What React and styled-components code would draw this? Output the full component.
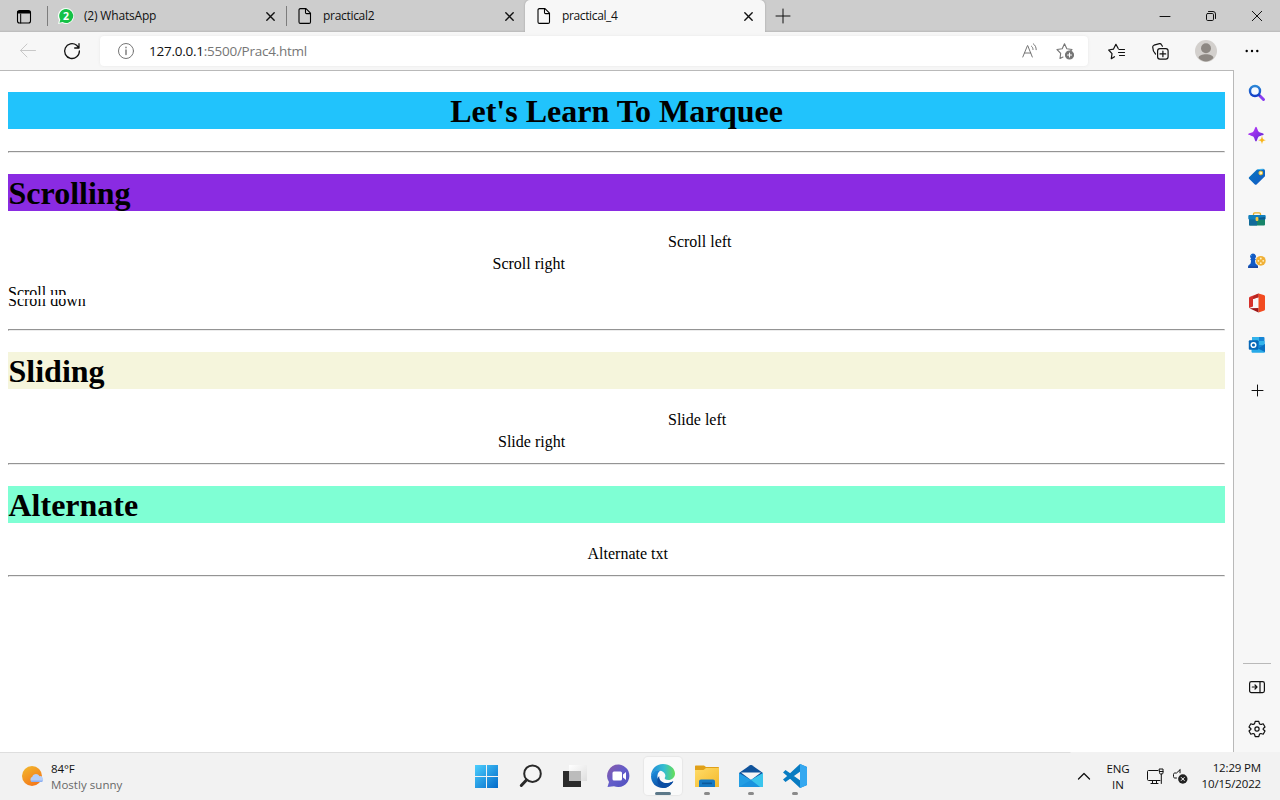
import React from "react";
import styled, { createGlobalStyle } from "styled-components";

const GlobalStyle = createGlobalStyle`
  * { box-sizing: border-box; }
  body { margin: 0; overflow: hidden; background: #fff; }
  svg { display: block; flex: none; overflow: visible; }
`;

const Screen = styled.div`
  width: 1280px;
  height: 800px;
  display: flex;
  flex-direction: column;
  font-family: "Open Sans", "Noto Sans", sans-serif;
  color: #111;
`;

const Label = styled.span`
  font-size: ${(p) => p.$size || 12}px;
  line-height: 16px;
  letter-spacing: ${(p) => p.$track || 0}px;
  color: ${(p) => p.$color || "#111"};
  white-space: nowrap;
`;

/* ---------- browser chrome ---------- */
const TabStrip = styled.header`
  height: 32px;
  flex: none;
  display: flex;
  background: linear-gradient(#cdcdcd 30px, #c3c3c3 31px, #b9b9b9 32px);
`;
const TabActions = styled.div`
  width: 47px;
  display: flex;
  align-items: center;
  justify-content: center;
`;
const Divider = styled.i`
  width: 1px;
  height: 20px;
  margin-top: 6px;
  background: #7d7d7d;
`;
const Tab = styled.div`
  width: ${(p) => p.$width}px;
  height: 32px;
  display: flex;
  align-items: center;
  padding: 0 ${(p) => p.$end || 11}px 0 ${(p) => p.$pad || 10}px;
  gap: 10px;
  background: ${(p) => (p.$active ? "#f7f7f7" : "transparent")};
  border-radius: 5px 5px 0 0;
  box-shadow: ${(p) => (p.$active ? "0 0 2px #999" : "none")};
  clip-path: inset(0 -3px 0 -3px);
  ${Label} { flex: 1; }
`;
const NewTab = styled.div`
  width: 35px;
  display: flex;
  align-items: center;
  justify-content: center;
`;
const WindowButtons = styled.div`
  margin-left: auto;
  display: flex;
  align-items: center;
`;
const WindowButton = styled.div`
  width: 46px;
  display: flex;
  justify-content: center;
`;
const Toolbar = styled.div`
  height: 38px;
  flex: none;
  display: flex;
  align-items: center;
  background: #f7f7f7;
`;
const ToolButton = styled.div`
  width: ${(p) => p.$width || 44}px;
  display: flex;
  justify-content: center;
`;
const AddressBar = styled.div`
  width: 988px;
  height: 30px;
  display: flex;
  align-items: center;
  padding: 0 14px 0 18px;
  background: #fff;
  border-radius: 4px;
  box-shadow: 0 0 3px #e6e6e6;
`;
const Url = styled.div`
  flex: 1;
  margin-left: 15px;
  display: flex;
`;
const AddressActions = styled.div`
  display: flex;
  align-items: center;
  gap: 18px;
`;
const Middle = styled.div`
  flex: 1;
  min-height: 0;
  display: flex;
  background: #f7f7f7;
`;

/* ---------- document ---------- */
const Document = styled.main`
  width: 1234px;
  border: solid #b9b9b9;
  border-width: 1px 1px 0 0;
  background: #fff;
  padding: 21px 8px 0;
  font-family: "Liberation Serif", serif;
  font-size: 16px;
  color: #000;
`;
const Heading = styled.h1`
  margin: 0;
  height: 37px;
  line-height: 38px;
  font-size: 32px;
  font-weight: bold;
  padding-left: ${(p) => (p.$align ? 0 : 0.5)}px;
  background: ${(p) => p.$bg};
  text-align: ${(p) => p.$align || "left"};
`;
const Rule = styled.hr`
  margin: ${(p) => p.$top}px 0 ${(p) => p.$bottom}px;
  height: 2px;
  border: 1px solid;
  border-color: #949494 #ececec #ececec #949494;
`;
const Marquees = styled.div`
  padding-top: 22px;
`;
const Marquee = styled.div`
  height: 22px;
  line-height: 18px;
  padding-left: ${(p) => p.$offset}px;
  white-space: nowrap;
`;
const ClippedMarquee = styled.div`
  height: ${(p) => p.$height}px;
  margin-top: ${(p) => p.$gap}px;
  line-height: 18px;
  overflow: hidden;
  display: flex;
  align-items: ${(p) => p.$anchor};
`;

/* ---------- sidebar ---------- */
const Sidebar = styled.aside`
  width: 46px;
  display: flex;
  flex-direction: column;
  align-items: center;
  padding-top: 2px;
`;
const SideItem = styled.div`
  height: ${(p) => p.$height || 42}px;
  display: flex;
  align-items: center;
`;
const SideFooter = styled.div`
  margin-top: auto;
  width: 28px;
  height: 89px;
  border-top: 1px solid #b9b9b9;
  padding-top: 2px;
  display: flex;
  flex-direction: column;
  align-items: center;
`;

/* ---------- taskbar ---------- */
const Taskbar = styled.footer`
  height: 48px;
  flex: none;
  display: grid;
  grid-template-columns: 467px 352px 1fr;
  background: linear-gradient(90deg, #dedede 1070px, #f2f2f2 1071px) 0 0 / 100% 1px no-repeat #f2f2f2;
`;
const Weather = styled.div`
  display: flex;
  align-items: center;
  padding: 1px 0 0 21px;
  gap: 7px;
`;
const Stack = styled.div`
  display: flex;
  flex-direction: column;
  align-items: ${(p) => p.$align || "flex-start"};
`;
const Apps = styled.div`
  display: flex;
  gap: 4px;
`;
const AppButton = styled.div`
  width: 40px;
  height: 48px;
  padding-top: 12px;
  display: flex;
  flex-direction: column;
  align-items: center;
`;
const ActivePlate = styled.div`
  width: 38px;
  height: 38px;
  margin: 5px 1px;
  padding-top: 7px;
  display: flex;
  flex-direction: column;
  align-items: center;
  background: #fafafa;
  border-radius: 4px;
  box-shadow: 0 0 1px 1px #e7e7e7;
`;
const Indicator = styled.i`
  width: ${(p) => (p.$active ? 16 : 6)}px;
  height: 3px;
  margin-top: 4px;
  border-radius: 2px;
  background: ${(p) => (p.$active ? "#5c7889" : "#8a8a8a")};
`;
const Tray = styled.div`
  display: flex;
  align-items: center;
  justify-content: flex-end;
  padding-right: 19px;
`;
const Languages = styled(Stack)`
  width: 30px;
  margin: 1px 14px 0 13px;
`;
const TrayIcons = styled.div`
  display: flex;
  gap: 9px;
  align-items: center;
  margin-right: 13px;
`;
const Clock = styled(Stack)`
  width: 60px;
`;

const Line = ({ w = 16, h = w, box = `0 0 ${w} ${h}`, color = "#111", sw = 1, children }) => (
  <svg width={w} height={h} viewBox={box} fill="none" stroke={color} strokeWidth={sw} strokeLinecap="round" strokeLinejoin="round">
    {children}
  </svg>
);

const TabCard = () => (
  <Line w={15} h={15} color="#000">
    <rect x="1.500" y="1.500" width="13" height="12.500" rx="2" strokeWidth="1.100" />
    <path d="M2 2.500h12v1.500H2z" fill="#000" strokeWidth="1" />
    <path d="M4.700 5v9" strokeWidth="1" />
  </Line>
);
const PageIcon = () => (
  <Line sw={1.1} color="#000">
    <path d="M4 .6h5l4.500 4.500V14c0 .8-.6 1.400-1.400 1.400H3.400c-.8 0-1.400-.6-1.400-1.400V2C2 1.200 2.600.6 3.400.6zM8.500.8v3.700c0 .6.500 1.100 1.100 1.100h3.700" />
  </Line>
);
const Close = () => (
  <Line w={9} color="#111" sw={1.400}><path d="M.8.800l7.400 7.400M8.200.800L.8 8.200" /></Line>
);
const Plus = ({ s = 13 }) => (
  <Line w={s}><path d={`M${s / 2} 0v${s}M0 ${s / 2}h${s}`} /></Line>
);
const WhatsApp = () => (
  <svg width="16" height="16" viewBox="0 0 16 16">
    <path d="M8 0a8 8 0 1 1-3.700 15.100L0 16l1-4A8 8 0 0 1 8 0z" fill="#f6fff8" />
    <path d="M8.200 1a7 7 0 1 1-3.600 13L1.500 14.700l.8-3A7 7 0 0 1 8.200 1z" fill="#15c146" />
    <text x="8.100" y="12" textAnchor="middle" fontFamily="Open Sans, sans-serif" fontWeight="700" fontSize="10.500" fill="#fff">2</text>
  </svg>
);

const SearchColor = () => (
  <svg width="18" height="18" viewBox="0 0 18 18">
    <path d="M11.500 11.500l4 4" stroke="#8a3df0" strokeWidth="3" strokeLinecap="round" />
    <path d="M10.500 10.500l1.500 1.500" stroke="#463cc7" strokeWidth="2" />
    <circle cx="7" cy="7" r="5" fill="#f5faff" stroke="url(#ring)" strokeWidth="2.400" />
    <defs><linearGradient id="ring" x2="0" y2="1"><stop stopColor="#2b86d6" /><stop offset="1" stopColor="#123fc8" /></linearGradient></defs>
  </svg>
);
const Sparkle = () => (
  <svg width="18" height="18" viewBox="0 0 18 18">
    <defs><linearGradient id="spark" x2="1" y2="1"><stop stopColor="#c33cff" /><stop offset="1" stopColor="#5a25cf" /></linearGradient></defs>
    <path d="M8 .8c1 0 1.500 3.800 2.800 4.900S15.800 7.200 15.800 8.200s-3.700 1.200-5 2.400S9 15.600 8 15.600s-1.500-3.800-2.800-5S.2 9.200.2 8.200s3.700-1.300 5-2.500S7 .8 8 .8z" fill="url(#spark)" />
    <path d="M14 10.200c.6 0 .7 2.100 1.200 2.700s2.600.7 2.600 1.300-2.100.6-2.600 1.100-.6 2.500-1.200 2.500-.7-1.900-1.200-2.500-2.600-.5-2.600-1.100 2.100-.7 2.600-1.300.6-2.700 1.200-2.700z" fill="#f8b416" stroke="#f7f7f7" strokeWidth=".5" />
  </svg>
);
const Tag = () => (
  <svg width="18" height="18" viewBox="0 0 18 18">
    <defs><linearGradient id="tag" x2="1" y2="1"><stop stopColor="#0875bd" /><stop offset="1" stopColor="#145bc8" /></linearGradient></defs>
    <path d="M9 1.500l6-.5c1.500 0 2 .8 2 2v5.200l-8.200 8c-.8.800-1.500.6-2.200 0L1.300 11c-.7-.7-.7-1.400 0-2.100z" fill="url(#tag)" />
    <path d="M10 1.600l5.500-.4" stroke="#43b8ed" strokeWidth="1" />
    <circle cx="12.800" cy="5" r="1.900" fill="#fff4bd" stroke="#e6b72e" />
  </svg>
);
const Toolbox = () => (
  <svg width="18" height="18" viewBox="0 0 18 18">
    <path d="M5.500 6V4c0-.8.500-1.200 1.300-1.200h4.400c.8 0 1.300.4 1.300 1.200v2" fill="none" stroke="#e9ae27" strokeWidth="1.300" />
    <rect x="1" y="8" width="16" height="7.500" rx="1" fill="#168469" />
    <path d="M1 8h8v7.500H2c-.6 0-1-.4-1-1z" fill="#126a99" />
    <rect x=".3" y="5" width="17.400" height="4.500" rx="1" fill="#127fbd" />
    <path d="M9 8l8-1v2.500H9z" fill="#0a5b8e" />
    <rect x="7.600" y="7" width="2.800" height="4" rx="1" fill="#f7ca45" />
  </svg>
);
const Games = () => (
  <svg width="18" height="18" viewBox="0 0 18 18">
    <circle cx="12.800" cy="8.800" r="4.900" fill="#f0b036" />
    <g fill="#fff3ca"><circle cx="12.800" cy="6.500" r=".9" /><circle cx="12.800" cy="11.200" r=".9" /><circle cx="10.400" cy="8.800" r=".9" /><circle cx="15.200" cy="8.800" r=".9" /></g>
    <path d="M5 1.500a3 3 0 0 1 2 5.200l1 .8-1 1 .5 3 2.500 2.200V16H.2v-2.300l2.400-2.200.5-3-1-1 1-.8A3 3 0 0 1 5 1.500z" fill="#125ac4" />
    <path d="M.2 14.300H10V16H.2z" fill="#1a48a2" />
    <path d="M4 2.800l-1.100 1" stroke="#38a4e8" strokeWidth="1" />
  </svg>
);
const Office = () => (
  <svg width="18" height="20" viewBox="0 0 18 20">
    <path d="M10.500.6L2 3.800C1.300 4.100 1 4.600 1 5.200V15l4-1.400V6l5.500-1.700z" fill="#d6312b" />
    <path d="M10.500.6L15.700 2c.8.200 1.300.7 1.300 1.500v12.700c0 .8-.5 1.300-1.300 1.500l-5.200 1.700z" fill="#f24b20" />
    <path d="M1.500 15.200l9-.1v4.300z" fill="#9c1618" />
    <path d="M5 6l5.500-1.700V.6L5 3.500z" fill="#b82622" />
  </svg>
);
const Outlook = () => (
  <svg width="18" height="18" viewBox="0 0 18 18">
    <rect x="4" y="1" width="12.500" height="12" rx="1" fill="#1686d6" />
    <path d="M5 1h6v4H4V2zM11 5h5.500v4H11z" fill="#32b3eb" />
    <path d="M3.500 9l6.500 3.500L17 8v7.500c0 .8-.5 1.300-1.200 1.300H4.700c-.7 0-1.200-.5-1.200-1.300z" fill="#27a9e8" />
    <path d="M10 12.500L17 8v8z" fill="#0b6fc1" />
    <rect x=".8" y="4.300" width="9.500" height="9.500" rx="1" fill="#0868b8" />
    <circle cx="5.500" cy="9" r="2.300" fill="none" stroke="#fff" strokeWidth="1.500" />
  </svg>
);
const Gear = () => (
  <Line w={18} sw={1.200}>
    <circle cx="9" cy="9" r="2.100" />
    <path d="M7.200 1.300h3.600l.6 2.300c.5.900 1 .9 2 .8l1.800-.6L17 7l-1.700 1.500c-.3.400-.3.700 0 1L17 11l-1.800 3.200-2.300-.7c-.9 0-1.300.3-1.500 1l-.6 2.200H7.200l-.6-2.200c-.3-.8-.7-1-1.500-1l-2.300.7L1 11l1.700-1.500c.4-.4.4-.6 0-1L1 7l1.800-3.200 1.800.6c1 .1 1.600.1 2-.8z" />
  </Line>
);

const WindowsLogo = () => (
  <svg width="24" height="24" viewBox="0 0 24 24">
    <defs><linearGradient id="win" gradientUnits="userSpaceOnUse" x2="24" y2="24"><stop stopColor="#4ed1ff" /><stop offset="1" stopColor="#0067c8" /></linearGradient></defs>
    <path d="M0 1h11v11H0zM12 1h11v11H12zM0 13h11v11H0zM12 13h11v11H12z" fill="url(#win)" />
  </svg>
);
const SearchTask = () => (
  <svg width="24" height="24" viewBox="0 0 24 24" fill="none" stroke="#292929">
    <circle cx="13.500" cy="9.700" r="8.300" fill="#f5f5f5" strokeWidth="2" />
    <path d="M7.500 16L2.300 21.500" strokeWidth="3" strokeLinecap="round" />
  </svg>
);
const TaskView = () => (
  <svg width="24" height="24" viewBox="0 0 24 24">
    <defs><linearGradient id="front" x2="1" y2="1"><stop stopColor="#fff" /><stop offset="1" stopColor="#dedede" /></linearGradient></defs>
    <path d="M0 7h18v16H0z" fill="#2c2c2c" />
    <path d="M6 1h18v16H6z" fill="url(#front)" />
    <path d="M6 7h12v10H6z" fill="#bcbcbc" />
  </svg>
);
const Chat = () => (
  <svg width="24" height="24" viewBox="0 0 24 24">
    <defs><linearGradient id="chat" x2="1" y2="1"><stop stopColor="#8b5ba7" /><stop offset=".5" stopColor="#635dca" /><stop offset="1" stopColor="#4f50bd" /></linearGradient></defs>
    <path d="M12 .5a11.300 11.300 0 1 1-5 21.800L.5 23l1.500-5A11.300 11.300 0 0 1 12 .5z" fill="url(#chat)" />
    <rect x="5.500" y="7.500" width="9.500" height="9" rx="1.500" fill="#fff" />
    <path d="M16 10.500L19 8v8l-3-2.500z" fill="#fff" />
  </svg>
);
const Edge = () => (
  <svg width="24" height="24" viewBox="0 0 24 24">
    <defs>
      <linearGradient id="edgeTop" x2="1"><stop stopColor="#238bd9" /><stop offset=".55" stopColor="#35bed0" /><stop offset="1" stopColor="#66df55" /></linearGradient>
      <linearGradient id="edgeBase" x2=".6" y2="1"><stop stopColor="#1d95e3" /><stop offset="1" stopColor="#0b459d" /></linearGradient>
    </defs>
    <path d="M0 12C0 5.500 5 0 12 0s12 4.500 12 9.500c0 4-3.200 6.500-6.500 6.500-3 0-4.300-1-3.700-2.200 1-1.700.7-3.500-.7-5C9 4.800 2.500 6.500 0 12z" fill="url(#edgeTop)" />
    <path d="M0 12C1.500 7 6 5.500 9.500 6.500 5 9 5 18 12.500 19.300c3 .5 6.500-.2 9.800-2.100C20.500 21 16.500 24 12 24 5 24 0 19 0 12z" fill="url(#edgeBase)" />
    <path d="M8.200 12c-.4 4.500 4 8.200 10 6.700 1.700-.3 3-1 4.100-1.500-1.600 3.500-5.300 6.300-9.300 6.700-6.500-1.300-8.500-8.100-4.800-11.900z" fill="#0b4da3" />
  </svg>
);
const Folder = () => (
  <svg width="24" height="24" viewBox="0 0 24 24">
    <defs><linearGradient id="folder" x2="1" y2="1"><stop stopColor="#ffdc68" /><stop offset="1" stopColor="#f4b92c" /></linearGradient></defs>
    <path d="M0 2.500c0-.6.400-1 1-1h8l2 1.500h12c.6 0 1 .4 1 1v6H0z" fill="#e0a018" />
    <path d="M0 6h8.500L11 4h13v19H0z" fill="url(#folder)" />
    <path d="M4 23v-5.500c0-1.200.8-2 2-2h12c1.200 0 2 .8 2 2V23z" fill="#167ac4" />
    <path d="M7 18.500h10v1.700H7z" fill="#0b5a9c" />
  </svg>
);
const Mail = () => (
  <svg width="24" height="24" viewBox="0 0 24 24">
    <path d="M0 9L11 1.200c.7-.4 1.300-.4 2 0L24 9v3L12 18 0 12z" fill="#10539b" />
    <path d="M2 8.500h20L12 16z" fill="#f6f6f6" />
    <path d="M0 9l12 7 12-7v14H0z" fill="#239ee4" />
    <path d="M12 16L24 9v14h-3z" fill="#3bc5ed" />
    <path d="M12 16l9 7H0z" fill="#168bd8" opacity=".55" />
  </svg>
);
const Code = () => (
  <svg width="24" height="24" viewBox="0 0 24 24">
    <path d="M17 0l7 3v18l-7 3-14-13-3-2.500L2.500 6 18 17V7L2.500 18 0 15.500 3 13z" fill="#087cc2" />
    <path d="M17 0l6 2.500c.6.300 1 .8 1 1.500v16c0 .7-.4 1.200-1 1.500L17 24z" fill="#35a8f0" />
  </svg>
);
const Sun = () => (
  <svg width="23" height="22" viewBox="0 0 23 22">
    <defs><linearGradient id="sun" x1=".2" x2=".8" y2="1"><stop stopColor="#f2b52c" /><stop offset="1" stopColor="#f47218" /></linearGradient></defs>
    <circle cx="11" cy="10" r="10" fill="url(#sun)" />
    <path d="M11.500 16a2.700 2.700 0 0 1-.2-5.200c.8-3.200 5.500-4 7.200-.6a3 3 0 0 1 1.500 5.800z" fill="#b5cffa" />
    <path d="M9.500 14.500h12.500c-.5 1-1 1.500-2 1.500h-8.500c-1 0-1.600-.5-2-1.500z" fill="#8eaff0" />
  </svg>
);

export default function App() {
  return (
    <Screen>
      <GlobalStyle />
      <TabStrip>
        <TabActions><TabCard /></TabActions>
        <Divider />
        <Tab $width={238}><WhatsApp /><Label $track={-0.18}>(2) WhatsApp</Label><Close /></Tab>
        <Divider />
        <Tab $width={238}><PageIcon /><Label $track={-0.3}>practical2</Label><Close /></Tab>
        <Tab $width={240} $pad={11} $end={12} $active><PageIcon /><Label $track={-0.37}>practical_4</Label><Close /></Tab>
        <NewTab><Plus s={14} /></NewTab>
        <WindowButtons>
          <WindowButton><Line w={10}><path d="M0 5.500h10" /></Line></WindowButton>
          <WindowButton><Line w={10}><rect x=".5" y="2.500" width="7" height="7" rx="1.200" /><path d="M2.500.5H7A2.500 2.500 0 0 1 9.500 3v4.500" /></Line></WindowButton>
          <WindowButton><Line w={10}><path d="M.3.300l9.400 9.400M9.700.300L.3 9.700" /></Line></WindowButton>
        </WindowButtons>
      </TabStrip>

      <Toolbar>
        <ToolButton $width={56}><Line color="#c8c8c8"><path d="M15.500 7.500H.5M7 1L.5 7.500 7 14" /></Line></ToolButton>
        <ToolButton $width={32}><Line w={16} sw={1.300}><path d="M15.400 8A7.400 7.400 0 1 1 12.600 2.300l2.200 2.400M15 .7v4.300h-4.300" /></Line></ToolButton>
        <ToolButton $width={12} />
        <AddressBar>
          <Line w={16} color="#767676"><circle cx="8" cy="8" r="7.500" /><path d="M8 7v4.500M8 4.300v.4" strokeWidth="1.400" /></Line>
          <Url><Label $size={13.5} $track={-0.25}>127.0.0.1</Label><Label $size={13.5} $track={-0.25} $color="#767676">:5500/Prac4.html</Label></Url>
          <AddressActions>
            <Line w={16} color="#767676"><path d="M.8 14L5.500 2.500h.2L10.300 14M2.400 10h6.400M9.500 3.200c1 .8 1.500 2 1.500 3.300M11.300.8c1.900 1.400 2.900 3.400 2.900 5.900" /></Line>
            <Line w={18} color="#767676" sw={1.100}>
              <path d="M7 15l-3 1.500.7-5.200L1 7.500l5.200-.8L8.500 1.700l2.300 5 5.200.8-1.500 1.500" />
              <circle cx="13.500" cy="13" r="4" fill="#767676" /><path d="M13.500 11v4M11.500 13h4" stroke="#fff" />
            </Line>
          </AddressActions>
        </AddressBar>
        <ToolButton $width={56}><Line w={17} sw={1.200}><path d="M6.500 13.700L3.300 15.700l.7-5L.7 7l4.700-.8L7.900 1.300l2.300 4.200M11 6.500h5.500M10.500 9.500h6M11.500 12.500h5" /></Line></ToolButton>
        <ToolButton $width={32}><Line w={17} sw={1.200}><path d="M3.500 11C1.500 9 .7 5.500.7 4c0-1 .5-1.500 1.300-1.800L7.500.7c1-.2 1.500.1 2 1l.9 1.500" /><rect x="5.600" y="5.600" width="10.500" height="10.500" rx="2.300" /><path d="M10.900 8v5.700M8 10.900h5.700" /></Line></ToolButton>
        <ToolButton $width={60}>
          <svg width="22" height="22" viewBox="0 0 22 22"><circle cx="11" cy="11" r="11" fill="#d3d0cd" /><circle cx="11" cy="8.300" r="5" fill="#8d8883" /><path d="M3.600 18c0-5 14.800-5 14.800 0-4 4.500-10.800 4.500-14.800 0z" fill="#8d8883" /></svg>
        </ToolButton>
        <ToolButton $width={32}><svg width="14" height="4" viewBox="0 0 14 4"><circle cx="1.700" cy="2" r="1.200" /><circle cx="7" cy="2" r="1.200" /><circle cx="12.300" cy="2" r="1.200" /></svg></ToolButton>
      </Toolbar>

      <Middle>
        <Document>
          <Heading $bg="#21c3fc" $align="center">Let's Learn To Marquee</Heading>
          <Rule $top={22} $bottom={21} />
          <Heading $bg="#8a2be2">Scrolling</Heading>
          <Marquees>
            <Marquee $offset={660}>Scroll left</Marquee>
            <Marquee $offset={484.5}>Scroll right</Marquee>
            <ClippedMarquee $height={11} $gap={7} $anchor="flex-start">Scroll up</ClippedMarquee>
            <ClippedMarquee $height={11} $gap={4} $anchor="flex-end">Scroll down</ClippedMarquee>
          </Marquees>
          <Rule $top={19} $bottom={21} />
          <Heading $bg="#f5f5dc">Sliding</Heading>
          <Marquees>
            <Marquee $offset={660}>Slide left</Marquee>
            <Marquee $offset={490}>Slide right</Marquee>
          </Marquees>
          <Rule $top={8} $bottom={21} />
          <Heading $bg="#7fffd4">Alternate</Heading>
          <Marquees><Marquee $offset={579.5}>Alternate txt</Marquee></Marquees>
          <Rule $top={8} $bottom={0} />
        </Document>
        <Sidebar>
          {[SearchColor, Sparkle, Tag, Toolbox, Games, Office, Outlook].map((Icon, i) => (
            <SideItem key={i}><Icon /></SideItem>
          ))}
          <SideItem $height={49}><Plus s={11} /></SideItem>
          <SideFooter>
            <SideItem><Line w={16} sw={1.200}><rect x=".6" y="2.600" width="14.800" height="11" rx="1.800" /><path d="M11 2.600v11M3.300 8h4.500M6 6l2 2-2 2" /></Line></SideItem>
            <SideItem><Gear /></SideItem>
          </SideFooter>
        </Sidebar>
      </Middle>

      <Taskbar>
        <Weather>
          <Sun />
          <Stack><Label $size={11.5} $track={-0.1}>84°F</Label><Label $size={11.5} $track={0.04} $color="#686868">Mostly sunny</Label></Stack>
        </Weather>
        <Apps>
          <AppButton><WindowsLogo /></AppButton>
          <AppButton><SearchTask /></AppButton>
          <AppButton><TaskView /></AppButton>
          <AppButton><Chat /></AppButton>
          <ActivePlate><Edge /><Indicator $active /></ActivePlate>
          <AppButton><Folder /><Indicator /></AppButton>
          <AppButton><Mail /><Indicator /></AppButton>
          <AppButton><Code /><Indicator /></AppButton>
        </Apps>
        <Tray>
          <Line w={12} sw={1.300}><path d="M.5 9L6 3.500 11.500 9" /></Line>
          <Languages $align="center"><Label $size={11.5} $track={-0.1}>ENG</Label><Label $size={11.5}>IN</Label></Languages>
          <TrayIcons>
            <Line w={17} h={17}><path d="M11 2.500H1.500c-.6 0-1 .4-1 1v8c0 .6.400 1 1 1H13M4 15.500h7M5.500 12.500v3M9.500 12.500v3M12.500 1h3.500v4c0 .7-.5 1-1 1h-1.500c-.6 0-1-.4-1-1zM14.300 6v9.500M12.500 3.500H16" /></Line>
            <Line w={15} h={16}><path d="M7 1.800v3M7 1.800L3.500 5H2C1 5 .5 5.500.5 6.500v2c0 1 .5 1.500 1.500 1.500h1.500" /><circle cx="9.800" cy="11" r="4.700" fill="#222" stroke="none" /><path d="M8.300 9.500l3 3M11.300 9.500l-3 3" stroke="#fff" /></Line>
          </TrayIcons>
          <Clock $align="flex-end"><Label $size={11.5} $track={-0.16}>12:29 PM</Label><Label $size={11.5} $track={-0.16}>10/15/2022</Label></Clock>
        </Tray>
      </Taskbar>
    </Screen>
  );
}
